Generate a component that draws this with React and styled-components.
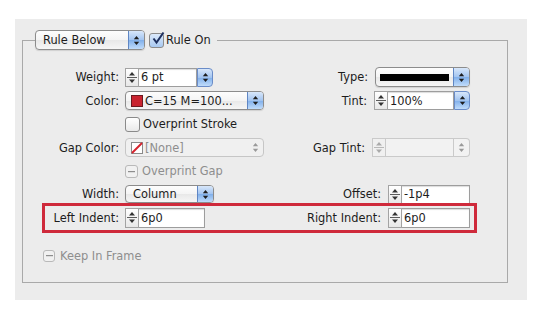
import styled, { createGlobalStyle, css } from 'styled-components';

const GlobalStyle = createGlobalStyle`
  html, body {
    margin: 0;
    background: #ffffff;
  }
  body {
    font-family: "DejaVu Sans", "Liberation Sans", sans-serif;
    font-size: 11.4px;
    color: #1c1c1c;
  }
`;

const Panel = styled.div`
  width: 512px;
  height: 281px;
  margin: 19px 0 0 15px;
  padding: 11px 0 0 7px;
  box-sizing: border-box;
  background: #ececec;
`;

const Group = styled.fieldset`
  width: 486px;
  box-sizing: border-box;
  margin: 0;
  padding: 15.8px 0 14.3px;
  border: 1px solid #a9a9a9;
  min-inline-size: 0;
`;

const Legend = styled.legend`
  margin-left: 12px;
  padding: 0 6px 0 0;
  height: 20px;
  display: flex;
  align-items: center;
  gap: 4px;
`;

const Rows = styled.div`
  display: flex;
  flex-direction: column;
`;

const Row = styled.div`
  display: flex;
  align-items: center;
  height: 23.4px;
  box-sizing: border-box;
  padding-right: 37px;
  padding-left: ${(p) => p.$pl ?? 0}px;
  margin-top: ${(p) => p.$mt ?? 0}px;
  ${(p) =>
    p.$marked &&
    css`
      margin: 0 33px 0 22px;
      padding-right: 4px;
      outline: 3px solid #cf2a3b;
    `}
`;

const Label = styled.span`
  flex: none;
  width: ${(p) => p.$w ?? 96}px;
  margin-right: 6px;
  text-align: right;
  white-space: nowrap;
`;

const Side = styled.div`
  margin-left: auto;
  display: flex;
  align-items: center;
  gap: 7px;
  white-space: nowrap;
`;

const Popup = styled.div`
  display: flex;
  flex: none;
  width: ${(p) => p.$w}px;
  height: ${(p) => p.$h ?? 19}px;
  box-sizing: border-box;
  border: 1px solid ${(p) => (p.$disabled ? '#c6c6c6' : '#8c8c8c')};
  border-radius: 4px;
  overflow: hidden;
  background: ${(p) =>
    p.$disabled
      ? '#f0f0f0'
      : 'linear-gradient(#fdfdfd, #f4f4f4 50%, #e8e8e8 51%, #f6f6f6)'};
  color: ${(p) => (p.$disabled ? '#8e8e8e' : 'inherit')};
  box-shadow: ${(p) => (p.$disabled ? 'none' : '0 1px 1px rgba(0,0,0,0.12)')};
`;

const PopupValue = styled.span`
  flex: 1;
  display: flex;
  align-items: center;
  gap: 2px;
  padding-left: ${(p) => p.$pl ?? 6}px;
  white-space: nowrap;
  overflow: hidden;
`;

const ArrowBox = styled.span`
  flex: none;
  width: 15px;
  display: flex;
  align-items: center;
  justify-content: center;
  ${(p) =>
    p.$disabled
      ? css`
          background: transparent;
        `
      : css`
          border-left: 1px solid #5f86c4;
          background: linear-gradient(#d8e7fa, #a2c4f0 50%, #80afea 51%, #c0dcfb);
        `}
`;

const Combo = styled.div`
  display: flex;
  flex: none;
  width: ${(p) => p.$w}px;
  height: ${(p) => p.$h ?? 19}px;
  color: ${(p) => (p.$disabled ? '#8e8e8e' : 'inherit')};
`;

const Stepper = styled.span`
  flex: none;
  width: 14px;
  box-sizing: border-box;
  border: 1px solid ${(p) => (p.$disabled ? '#cacaca' : '#a3a3a3')};
  background: ${(p) => (p.$disabled ? '#f0f0f0' : 'linear-gradient(#ffffff, #e8e8e8)')};
  display: flex;
  align-items: center;
  justify-content: center;
`;

const Field = styled.span`
  flex: 1;
  box-sizing: border-box;
  border: 1px solid ${(p) => (p.$disabled ? '#cacaca' : '#9d9d9d')};
  border-left: none;
  background: ${(p) => (p.$disabled ? '#f2f2f2' : '#ffffff')};
  box-shadow: ${(p) => (p.$disabled ? 'none' : 'inset 0 1px 1px rgba(0,0,0,0.14)')};
  padding-left: 2px;
  display: flex;
  align-items: center;
  white-space: nowrap;
`;

const ComboArrow = styled(ArrowBox)`
  box-sizing: border-box;
  width: 16px;
  border-radius: 0 4px 4px 0;
  ${(p) =>
    p.$disabled
      ? css`
          border: 1px solid #cacaca;
          border-left: none;
          background: #f2f2f2;
        `
      : css`
          border: 1px solid #6a8cc8;
        `}
`;

const ColorSwatch = styled.span`
  flex: none;
  width: 10px;
  height: 10px;
  background: #c9232f;
  border: 1px solid #6b1a1f;
`;

const LineSwatch = styled.span`
  flex: none;
  width: 69px;
  height: 7px;
  background: #000;
`;

const Check = styled.span`
  flex: none;
  width: ${(p) => p.$size ?? 14}px;
  height: ${(p) => p.$size ?? 14}px;
  box-sizing: border-box;
  border: 1px solid ${(p) => (p.$disabled ? '#b9b9b9' : '#8a8a8a')};
  border-radius: 3px;
  background: ${(p) =>
    p.$checked
      ? 'linear-gradient(#dbe9fa, #a9c9f1)'
      : p.$disabled
        ? '#f1f1f1'
        : 'linear-gradient(#ffffff, #e9e9e9)'};
  display: flex;
  align-items: center;
  justify-content: center;
  position: relative;
`;

const CheckLabel = styled.span`
  display: flex;
  align-items: center;
  gap: ${(p) => p.$gap ?? 3}px;
  white-space: nowrap;
  color: ${(p) => (p.$disabled ? '#8e8e8e' : 'inherit')};
`;

const UpDown = ({ color = '#1e1e1e' }) => (
  <svg width="7" height="11" viewBox="0 0 7 11">
    <path d="M3.5 1 L6.2 4.2 H0.8Z M3.5 10 L6.2 6.8 H0.8Z" fill={color} />
  </svg>
);

const StepIcon = ({ color = '#333' }) => (
  <svg width="10" height="15" viewBox="0 0 10 15">
    <path d="M5 2 L8 5.6 H2Z" fill={color} />
    <line x1="0" y1="7.5" x2="10" y2="7.5" stroke={color} strokeWidth="0.8" />
    <path d="M5 13 L8 9.4 H2Z" fill={color} />
  </svg>
);

const CheckMark = () => (
  <svg width="14" height="14" viewBox="0 0 14 14" style={{ position: 'absolute', left: 1, top: -3 }}>
    <path d="M2.5 7.5 L5.5 11.5 L12.5 1.5" fill="none" stroke="#1d2f5e" strokeWidth="2" />
  </svg>
);

const Dash = () => (
  <svg width="7" height="3" viewBox="0 0 7 3">
    <rect x="0" y="1" width="7" height="1.2" fill="#8e8e8e" />
  </svg>
);

const NoneSwatch = () => (
  <svg width="12" height="12" viewBox="0 0 12 12">
    <rect x="0.5" y="0.5" width="11" height="11" fill="#fff" stroke="#8a8a8a" />
    <line x1="1" y1="11" x2="11" y2="1" stroke="#d6232d" strokeWidth="2" />
  </svg>
);

const SelectPopup = ({ w, h, disabled, pl, children }) => (
  <Popup $w={w} $h={h} $disabled={disabled}>
    <PopupValue $pl={pl}>{children}</PopupValue>
    <ArrowBox $disabled={disabled}>
      <UpDown color={disabled ? '#9a9a9a' : '#1e1e1e'} />
    </ArrowBox>
  </Popup>
);

const NumberBox = ({ w, h, value, arrow, disabled }) => (
  <Combo $w={w} $h={h} $disabled={disabled}>
    <Stepper $disabled={disabled}>
      <StepIcon color={disabled ? '#aaa' : '#333'} />
    </Stepper>
    <Field $disabled={disabled}>{value}</Field>
    {arrow && (
      <ComboArrow $disabled={disabled}>
        <UpDown color={disabled ? '#9a9a9a' : '#1e1e1e'} />
      </ComboArrow>
    )}
  </Combo>
);

const App = () => {
  return (
    <>
      <GlobalStyle />
      <Panel>
        <Group>
          <Legend>
            <SelectPopup w={110} h={20} pl={7}>Rule Below</SelectPopup>
            <CheckLabel $gap={2}>
              <Check $size={15} $checked>
                <CheckMark />
              </Check>
              Rule On
            </CheckLabel>
          </Legend>

          <Rows>
            <Row>
              <Label>Weight:</Label>
              <NumberBox w={88} value="6 pt" arrow />
              <Side>
                Type:
                <SelectPopup w={95} h={20} pl={4}>
                  <LineSwatch />
                </SelectPopup>
              </Side>
            </Row>

            <Row>
              <Label>Color:</Label>
              <SelectPopup w={139} pl={5}>
                <ColorSwatch />
                C=15 M=100...
              </SelectPopup>
              <Side>
                Tint:
                <NumberBox w={96} value="100%" arrow />
              </Side>
            </Row>

            <Row>
              <Label />
              <CheckLabel>
                <Check $size={15} />
                Overprint Stroke
              </CheckLabel>
            </Row>

            <Row>
              <Label>Gap Color:</Label>
              <SelectPopup w={139} pl={5} disabled>
                <NoneSwatch />
                [None]
              </SelectPopup>
              <Side>
                Gap Tint:
                <NumberBox w={98} value="" arrow disabled />
              </Side>
            </Row>

            <Row>
              <Label />
              <CheckLabel $disabled $gap={4}>
                <Check $size={13} $disabled>
                  <Dash />
                </Check>
                Overprint Gap
              </CheckLabel>
            </Row>

            <Row>
              <Label>Width:</Label>
              <SelectPopup w={89} h={18} pl={7}>Column</SelectPopup>
              <Side>
                Offset:
                <NumberBox w={82} value="-1p4" />
              </Side>
            </Row>

            <Row $marked>
              <Label $w={74}>Left Indent:</Label>
              <NumberBox w={80} h={20} value="6p0" />
              <Side>
                Right Indent:
                <NumberBox w={82} h={20} value="6p0" />
              </Side>
            </Row>

            <Row $mt={14.7} $pl={20}>
              <CheckLabel $disabled $gap={5}>
                <Check $size={12} $disabled>
                  <Dash />
                </Check>
                Keep In Frame
              </CheckLabel>
            </Row>
          </Rows>
        </Group>
      </Panel>
    </>
  );
};

export default App;
